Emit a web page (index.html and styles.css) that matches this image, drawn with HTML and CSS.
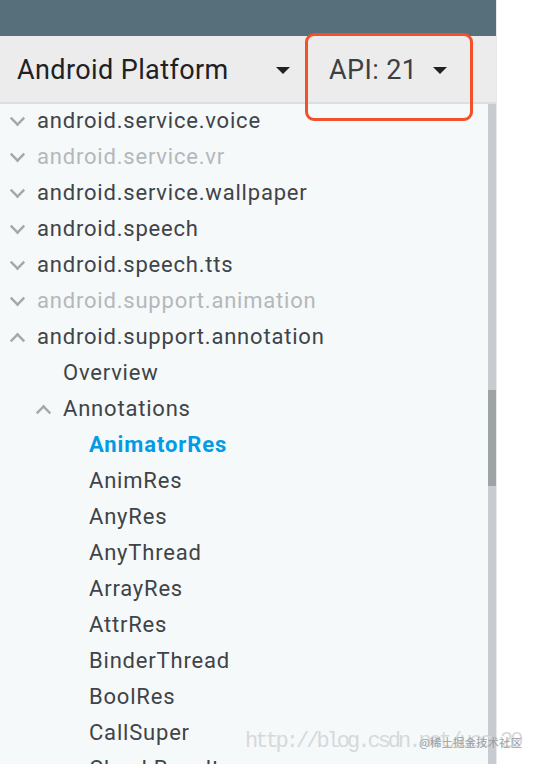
FILE: index.html
```html
<!DOCTYPE html>
<html>
<head>
<meta charset="utf-8">
<link rel="stylesheet" href="styles.css">
</head>
<body>
<div class="app">
  <div class="panel">
    <div class="topbar"></div>
    <div class="header">
      <div class="select platform">
        <span class="label">Android Platform</span>
        <span class="caret"></span>
      </div>
      <div class="select api">
        <span class="label">API: 21</span>
        <span class="caret"></span>
      </div>
      <div class="highlight"></div>
    </div>
    <div class="body">
      <ul class="tree">
        <li class="row l0"><span class="chev down"></span>android.service.voice</li>
        <li class="row l0 disabled"><span class="chev down"></span>android.service.vr</li>
        <li class="row l0"><span class="chev down"></span>android.service.wallpaper</li>
        <li class="row l0"><span class="chev down"></span>android.speech</li>
        <li class="row l0"><span class="chev down"></span>android.speech.tts</li>
        <li class="row l0 disabled"><span class="chev down"></span>android.support.animation</li>
        <li class="row l0"><span class="chev up"></span>android.support.annotation</li>
        <li class="row l1">Overview</li>
        <li class="row l1"><span class="chev up"></span>Annotations</li>
        <li class="row l2 active">AnimatorRes</li>
        <li class="row l2">AnimRes</li>
        <li class="row l2">AnyRes</li>
        <li class="row l2">AnyThread</li>
        <li class="row l2">ArrayRes</li>
        <li class="row l2">AttrRes</li>
        <li class="row l2">BinderThread</li>
        <li class="row l2">BoolRes</li>
        <li class="row l2">CallSuper</li>
        <li class="row l2">CheckResult</li>
      </ul>
      <div class="scrollbar"><div class="thumb"></div></div>
    </div>
  </div>
  <div class="rest"></div>
</div>
<div class="watermark">
  <span class="url">http://blog.csdn.net/ucc&nbsp;20</span>
  <span class="brand">@稀土掘金技术社区</span>
</div>
</body>
</html>
```
FILE: styles.css
```css
html, body {
  margin: 0;
  padding: 0;
  height: 100%;
  overflow: hidden;
  background: #ffffff;
}
body {
  font-family: Roboto, "Noto Sans", sans-serif;
}
.app {
  display: flex;
  height: 764px;
}
.panel {
  width: 496px;
  border-right: 1px solid #e6e8ea;
  display: flex;
  flex-direction: column;
  height: 764px;
  overflow: hidden;
}
.rest {
  flex: 1;
  background: #ffffff;
}
.topbar {
  height: 36px;
  background: #566f7b;
  flex-shrink: 0;
}
.header {
  position: relative;
  height: 66px;
  background: #ececed;
  border-bottom: 2px solid #dcdfe1;
  display: flex;
  align-items: center;
  flex-shrink: 0;
}
.select {
  display: flex;
  align-items: center;
}
.platform {
  padding-left: 17px;
  width: 274px;
}
.platform .label {
  width: 259px;
}
.api {
  padding-left: 38px;
}
.api .label {
  width: 104px;
  color: #3c4043;
}
.label {
  font-size: 27px;
  letter-spacing: 0.4px;
  color: #202124;
  white-space: nowrap;
  padding-top: 2px;
}
.caret {
  width: 0;
  height: 0;
  border-left: 7px solid transparent;
  border-right: 7px solid transparent;
  border-top: 7px solid #202124;
  margin-top: 2px;
}
.highlight {
  position: absolute;
  left: 305px;
  top: -3px;
  width: 162px;
  height: 82px;
  border: 3px solid #f3512b;
  border-radius: 9px;
  z-index: 2;
}
.body {
  flex: 1;
  display: flex;
  background: #f5f9fa;
  overflow: hidden;
}
.tree {
  flex: 1;
  list-style: none;
  margin: -1px 0 0 0;
  padding: 0;
}
.row {
  height: 36px;
  line-height: 36px;
  font-size: 22px;
  letter-spacing: 0.8px;
  color: #404347;
  white-space: nowrap;
  position: relative;
}
.row.l0 { padding-left: 37px; }
.row.l1 { padding-left: 63px; }
.row.l2 { padding-left: 89px; }
.row.disabled { color: #b4b8ba; }
.row.active { color: #039be5; font-weight: 700; letter-spacing: 0.9px; }
.chev {
  position: absolute;
  top: 14px;
  width: 9px;
  height: 9px;
  border-right: 2px solid #a5a8aa;
  border-bottom: 2px solid #a5a8aa;
  box-sizing: border-box;
}
.l0 .chev { left: 13px; }
.l1 .chev { left: 39px; }
.chev.down {
  transform: rotate(45deg) scaleX(1.2) scaleY(1.2);
  top: 11px;
}
.chev.up {
  transform: rotate(-135deg) scaleX(1.2) scaleY(1.2);
  top: 17px;
}
.scrollbar {
  width: 8px;
  background: #c8ccd0;
  flex-shrink: 0;
  padding-top: 286px;
}
.thumb {
  height: 96px;
  background: #9ea3a3;
}
.watermark {
  position: absolute;
  left: 245px;
  top: 729px;
  width: 291px;
  height: 30px;
  pointer-events: none;
}
.url {
  position: absolute;
  left: 0;
  top: 0;
  font-family: "Liberation Mono", monospace;
  font-size: 22px;
  letter-spacing: -3px;
  color: #d6d9da;
  white-space: nowrap;
}
.brand {
  position: absolute;
  left: 174px;
  top: 5px;
  font-family: "Noto Sans CJK SC", sans-serif;
  font-size: 11.5px;
  color: #9a9fa3;
  white-space: nowrap;
}
```
